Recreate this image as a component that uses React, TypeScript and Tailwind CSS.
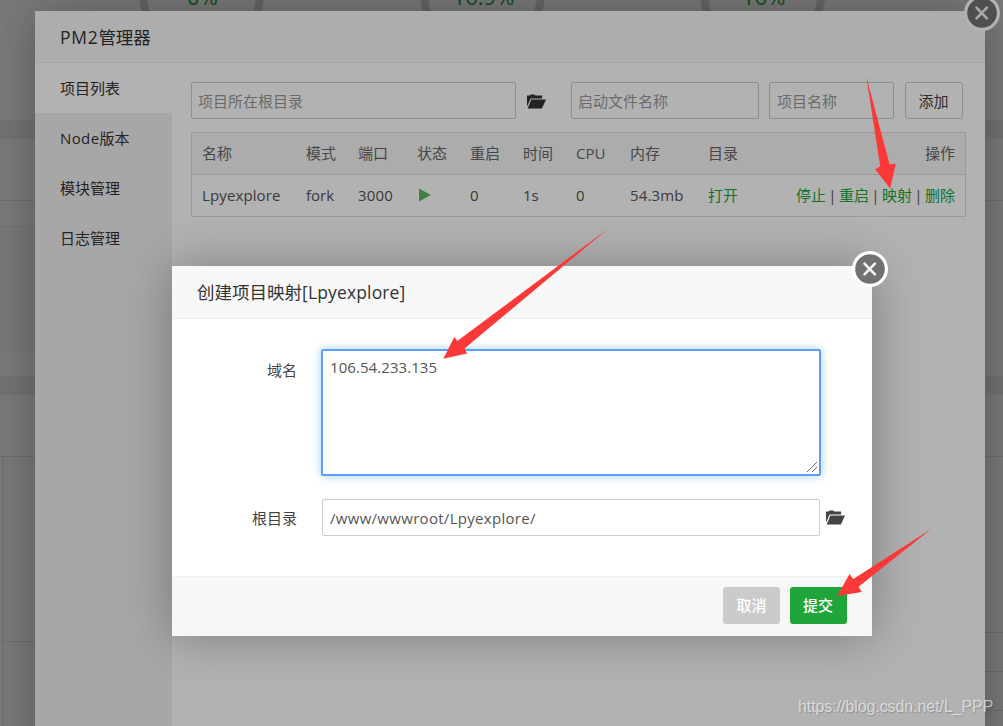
import type { ReactNode } from "react";

interface Gauge {
  cx: number;
  label: string;
}

interface Project {
  name: string;
  mode: string;
  port: string;
  restarts: string;
  uptime: string;
  cpu: string;
  memory: string;
}

const GAUGES: Gauge[] = [
  { cx: 201.5, label: "0%" },
  { cx: 482.5, label: "16.9%" },
  { cx: 762.7, label: "16%" },
];

const TABS = ["项目列表", "Node版本", "模块管理", "日志管理"];

const PROJECTS: Project[] = [
  { name: "Lpyexplore", mode: "fork", port: "3000", restarts: "0", uptime: "1s", cpu: "0", memory: "54.3mb" },
];

const ACTIONS = ["停止", "重启", "映射", "删除"];

function FolderIcon({ className }: { className: string }) {
  return (
    <svg width="20" height="15" viewBox="0 0 20 15" className={className} fill="currentColor">
      <path d="M0 12.4V1.6h2.8L3.6 .5h3.8l.8 1.1h6.9v2.8H3.7z" />
      <path d="M4.4 5.4H19L14.9 14.4H.6z" />
    </svg>
  );
}

function CloseButton({ className }: { className: string }) {
  return (
    <button className={`absolute size-9 ${className}`}>
      <svg width="36" height="36" viewBox="0 0 36 36" fill="none">
        <circle cx="18" cy="18" r="16.4" fill="#717171" stroke="#fff" strokeWidth="3.2" />
        <path d="M12.5 12.6l10.4 10.8M22.9 12.6L12.5 23.4" stroke="#f4f4f4" strokeWidth="2.6" strokeLinecap="round" />
      </svg>
    </button>
  );
}

function Mask() {
  return <div className="absolute inset-0 bg-black/30" />;
}

function DialogTitle({ children }: { children: ReactNode }) {
  return (
    <div className="shrink-0 border-b border-[#eee] bg-[#f8f8f8] pl-[25px] text-[17.5px] text-[#333]">{children}</div>
  );
}

function Dashboard() {
  return (
    <div className="absolute inset-0 flex flex-col bg-[#fbfbfb]">
      <div className="h-[120px] shrink-0">
        <svg width="1003" height="120" viewBox="0 0 1003 120">
          {GAUGES.map((g) => (
            <g key={g.cx}>
              <circle cx={g.cx} cy="-5.5" r="58.3" fill="none" stroke="#d3d3d3" strokeWidth="8" />
              <text x={g.cx + 1} y="4.5" textAnchor="middle" fontSize="22" fill="#20a53a">
                {g.label}
              </text>
            </g>
          ))}
        </svg>
      </div>
      <div className="h-[19px] shrink-0 bg-[#ececec]" />
      <div className="h-[62px] shrink-0 border-b border-[#e4e4e4]" />
      <div className="flex h-[175px] shrink-0 flex-col">
        <div className="h-[26px] w-[35px] shrink-0 border-b border-[#ececec]" />
        <div className="h-[124px] w-[35px] shrink-0 border-b border-[#ececec] bg-[#f8f8f8]" />
      </div>
      <div className="h-[19px] shrink-0 bg-[#ececec]" />
      <div className="h-[62px] shrink-0 border-b border-[#e2e2e2]" />
      <div className="flex flex-1 justify-between">
        <div className="flex w-9 flex-col">
          <div className="ml-[3px] h-[185px] border-b border-l border-[#e2e2e6]" />
          <div className="ml-[3px] flex-1 border-l border-[#e2e2e6]" />
        </div>
        <div className="w-[18px]">
          <div className="h-44 border-b border-[#ddd]" />
          <div className="h-[39px] border-b border-[#ddd]" />
          <div className="h-[39px] border-b border-[#ddd]" />
        </div>
      </div>
    </div>
  );
}

function ManagerDialog() {
  return (
    <div className="absolute left-[35px] top-[11px] flex h-[760px] w-[950px] flex-col rounded-sm bg-white shadow-[1px_1px_50px_rgba(0,0,0,0.3)]">
      <DialogTitle>
        <div className="h-[51px] leading-[53px]">
          <span className="tracking-[0.7px]">PM2</span>管理器
        </div>
      </DialogTitle>
      <CloseButton className="left-[929px] top-[-16px]" />
      <div className="flex flex-1">
        <ul className="w-[137px] shrink-0 bg-[#f0f0f1]">
          {TABS.map((tab, i) => (
            <li key={tab} className={`h-[50px] pl-[25px] leading-[50px] text-[#333] ${i === 0 ? "bg-white" : ""}`}>
              {tab.startsWith("Node") ? (
                <>
                  <span className="tracking-[0.4px]">Node</span>版本
                </>
              ) : (
                tab
              )}
            </li>
          ))}
        </ul>
        <div className="flex-1 pl-[19px] pt-[19px]">
          <div className="flex h-[37px] items-center">
            <input
              placeholder="项目所在根目录"
              className="h-[37px] w-[325px] rounded-xs border border-[#ccc] px-1.5 placeholder:text-[#999]"
            />
            <FolderIcon className="ml-[11px] mt-px text-[#333]" />
            <input
              placeholder="启动文件名称"
              className="ml-6 h-[37px] w-[188px] rounded-xs border border-[#ccc] px-1.5 placeholder:text-[#999]"
            />
            <input
              placeholder="项目名称"
              className="ml-[10px] h-[37px] w-[125px] rounded-xs border border-[#ccc] pl-[7px] pr-1.5 placeholder:text-[#999]"
            />
            <button className="ml-[11px] h-[37px] w-[58px] rounded-[3px] border border-[#ccc] pr-px text-[#444]">添加</button>
          </div>
          <table className="mt-[13px] w-[775px] table-fixed border-separate border-spacing-0 border border-[#ddd] text-left text-[#555]">
            <colgroup>
              <col className="w-[104px]" />
              <col className="w-[52px]" />
              <col className="w-[59px]" />
              <col className="w-[53px]" />
              <col className="w-[53px]" />
              <col className="w-[53px]" />
              <col className="w-[54px]" />
              <col className="w-[78px]" />
              <col className="w-[60px]" />
              <col />
            </colgroup>
            <thead>
              <tr className="h-[42px] bg-[#f6f6f6] text-[#666]">
                {["名称", "模式", "端口", "状态", "重启", "时间", "CPU", "内存", "目录"].map((h) => (
                  <th key={h} className="border-b border-[#ddd] pb-0.5 pl-[10px] font-normal">
                    {h}
                  </th>
                ))}
                <th className="border-b border-[#ddd] pb-0.5 pr-[10px] text-right font-normal">操作</th>
              </tr>
            </thead>
            <tbody>
              {PROJECTS.map((p) => (
                <tr key={p.name} className="h-[41px]">
                  <td className="pb-0.5 pl-[10px] tracking-[0.12px]">{p.name}</td>
                  <td className="pb-0.5 pl-[10px]">{p.mode}</td>
                  <td className="pb-0.5 pl-[10px] tracking-[0.2px]">{p.port}</td>
                  <td className="pb-0.5 pl-3">
                    <svg width="12" height="14" viewBox="0 0 12 14">
                      <path d="M0 .5L11.8 7 0 13.5z" fill="#5cb85c" />
                    </svg>
                  </td>
                  <td className="pb-0.5 pl-[10px]">{p.restarts}</td>
                  <td className="pb-0.5 pl-[10px]">{p.uptime}</td>
                  <td className="pb-0.5 pl-[10px]">{p.cpu}</td>
                  <td className="pb-0.5 pl-[10px] tracking-[0.15px]">{p.memory}</td>
                  <td className="pb-0.5 pl-[10px] text-[#20a53a]">打开</td>
                  <td className="whitespace-nowrap pb-0.5 pr-[10px]">
                    <div className="flex justify-end">
                      {ACTIONS.map((a, i) => (
                        <span key={a} className="flex">
                          {i > 0 && <span className="w-[13px] text-center">|</span>}
                          <a className="text-[#20a53a]">{a}</a>
                        </span>
                      ))}
                    </div>
                  </td>
                </tr>
              ))}
            </tbody>
          </table>
        </div>
      </div>
    </div>
  );
}

function MappingDialog() {
  return (
    <div className="absolute left-[172px] top-[266px] flex h-[370px] w-[700px] flex-col rounded-xs bg-white shadow-[1px_1px_50px_rgba(0,0,0,0.3)]">
      <DialogTitle>
        <div className="h-[52px] leading-[53px]">
          创建项目映射<span className="tracking-[0.15px]">[Lpyexplore]</span>
        </div>
      </DialogTitle>
      <CloseButton className="left-[680px] top-[-15px]" />
      <div className="flex-1 pt-[30px] text-[#444]">
        <div className="flex">
          <label className="w-[125px] pt-[10px] text-right">域名</label>
          <div className="relative ml-6 h-[127px] w-[500px]">
            <textarea
              defaultValue="106.54.233.135"
              className="size-full resize-none rounded-xs border-2 border-[#5a9ffb] px-[7px] py-[5px] leading-[22px] tracking-[0.07px] text-[#555] shadow-[0_0_10px_rgba(102,175,233,0.6)] outline-none"
            />
            <svg width="10" height="10" viewBox="0 0 10 10" className="absolute bottom-[4px] right-[4px]" stroke="#555" strokeWidth="0.9" fill="none">
              <path d="M0 10L10 0M5 10L10 5" />
            </svg>
          </div>
        </div>
        <div className="mt-[23px] flex h-[37px] items-center">
          <label className="w-[125px] pt-px text-right">根目录</label>
          <input
            defaultValue="/www/wwwroot/Lpyexplore/"
            className="ml-[25px] h-[37px] w-[498px] rounded-xs border border-[#ccc] px-[7px] tracking-[0.3px] text-[#555]"
          />
          <FolderIcon className="ml-[6px] text-[#444]" />
        </div>
      </div>
      <div className="flex h-[60px] shrink-0 gap-[10px] border-t border-[#edf1f2] bg-[#f6f8f8] pl-[551px] pt-[10px]">
        <button className="h-[37px] w-[57px] rounded-[3px] bg-[#cbcbcb] pb-0.5 font-medium text-white">取消</button>
        <button className="h-[37px] w-[57px] rounded-[3px] bg-[#20a53a] pb-0.5 pr-px font-medium text-white">提交</button>
      </div>
    </div>
  );
}

function Arrows() {
  return (
    <svg width="1003" height="726" viewBox="0 0 1003 726" className="pointer-events-none absolute inset-0" fill="#fd3838">
      <path d="M866.3 76.5L889.6 164.4 895.8 163.7 890.2 188.8 875.2 169.2 880.2 166.3z" />
      <path d="M608 228.7L464.5 348.5 467 353.5 443.3 358.8 454.3 337 457.3 341z" />
      <path d="M931.5 528.7L858.5 586.7 861.8 592 837.3 596 849.5 574 853.3 579z" />
    </svg>
  );
}

export default function App() {
  return (
    <div className="relative h-[726px] w-[1003px] overflow-hidden font-['Open_Sans','Noto_Sans_CJK_SC',sans-serif] text-[15px] leading-[22px]">
      <Dashboard />
      <Mask />
      <ManagerDialog />
      <Mask />
      <MappingDialog />
      <Arrows />
      <div className="absolute left-[798px] top-[696px] whitespace-nowrap font-['Liberation_Sans',sans-serif] text-[16px] tracking-[-0.08px] text-white/60 [text-shadow:1px_1px_1px_rgba(0,0,0,0.2)]">
        https://blog.csdn.net/L_PPP
      </div>
    </div>
  );
}
